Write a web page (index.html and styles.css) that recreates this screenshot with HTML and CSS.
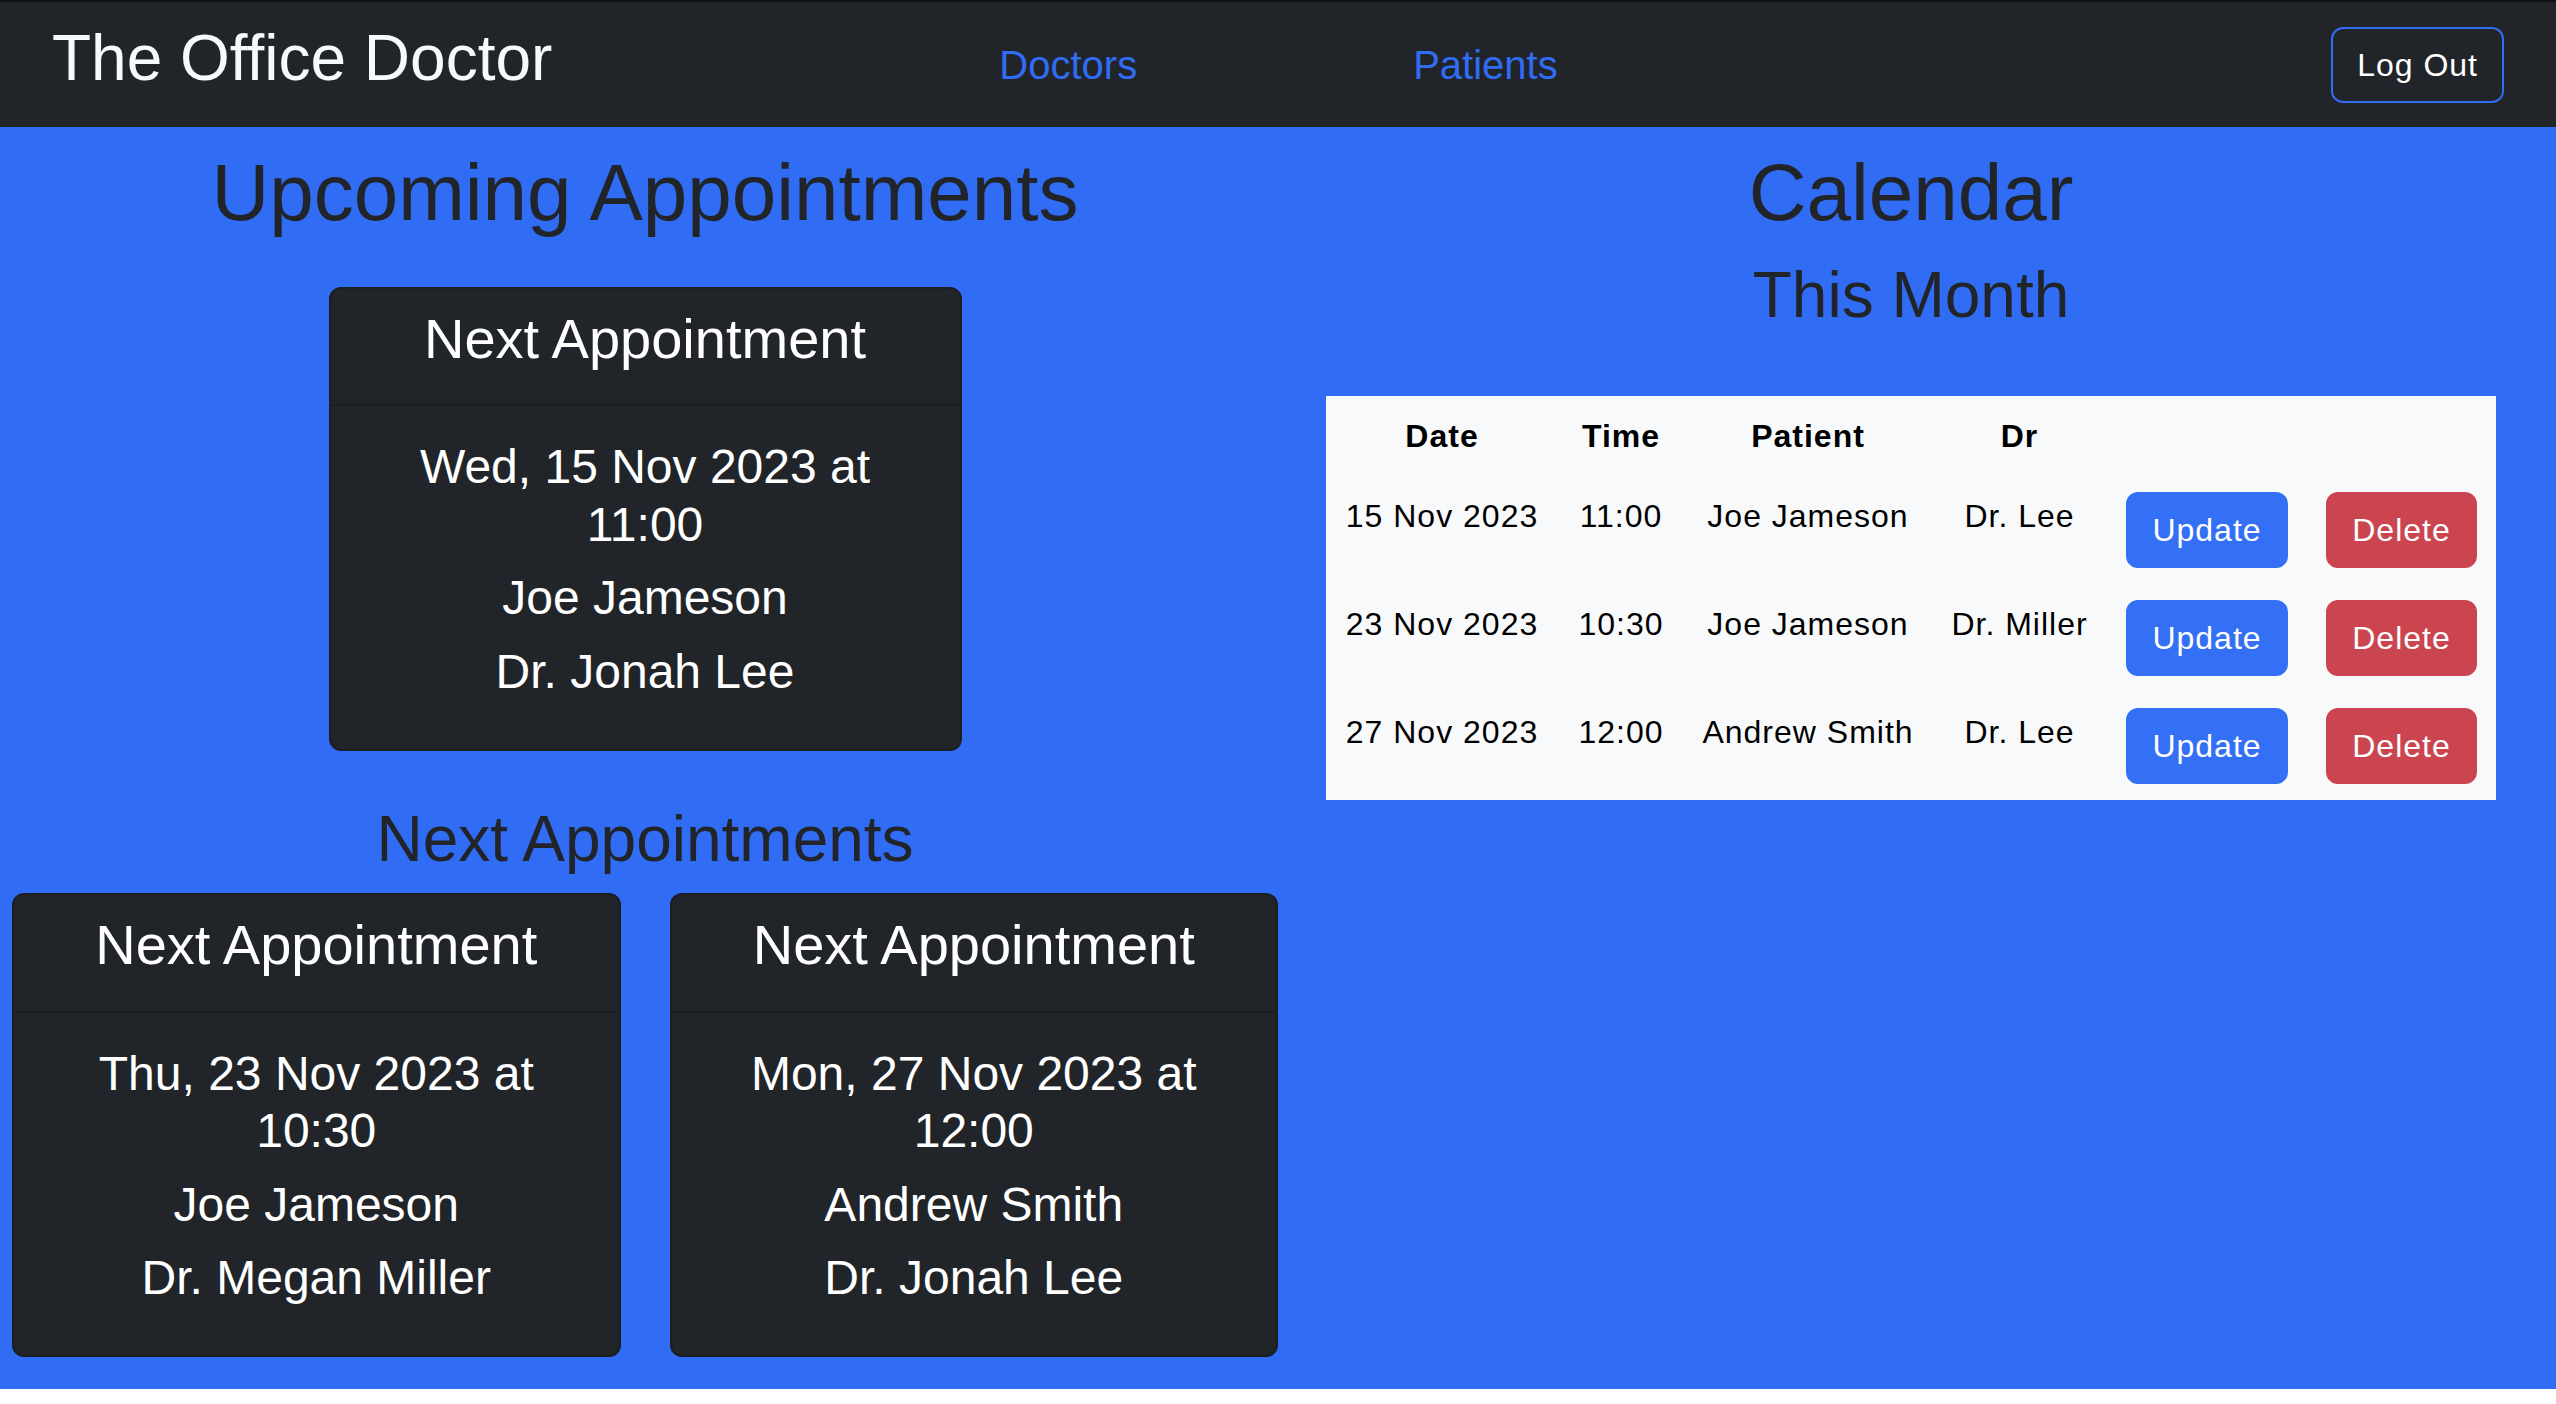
FILE: index.html
```html
<!DOCTYPE html>
<html lang="en">
<head>
<meta charset="utf-8">
<title>The Office Doctor</title>
<link rel="stylesheet" href="styles.css">
</head>
<body>
<nav class="navbar">
  <a class="brand" href="#">The Office Doctor</a>
  <div class="nav-links">
    <a class="nav-link" href="#">Doctors</a>
    <a class="nav-link" href="#">Patients</a>
  </div>
  <button class="btn-logout" type="button">Log Out</button>
</nav>

<main class="dashboard">
  <section class="col-left">
    <h1 class="page-title">Upcoming Appointments</h1>
    <div class="card card-featured">
      <div class="card-header"><h3>Next Appointment</h3></div>
      <div class="card-body">
        <h4>Wed, 15 Nov 2023 at 11:00</h4>
        <h4>Joe Jameson</h4>
        <h4>Dr. Jonah Lee</h4>
      </div>
    </div>
    <h2 class="section-title">Next Appointments</h2>
    <div class="card-grid">
      <div class="card">
        <div class="card-header"><h3>Next Appointment</h3></div>
        <div class="card-body">
          <h4>Thu, 23 Nov 2023 at 10:30</h4>
          <h4>Joe Jameson</h4>
          <h4>Dr. Megan Miller</h4>
        </div>
      </div>
      <div class="card">
        <div class="card-header"><h3>Next Appointment</h3></div>
        <div class="card-body">
          <h4>Mon, 27 Nov 2023 at 12:00</h4>
          <h4>Andrew Smith</h4>
          <h4>Dr. Jonah Lee</h4>
        </div>
      </div>
    </div>
  </section>

  <section class="col-right">
    <h1 class="page-title">Calendar</h1>
    <h2 class="section-title">This Month</h2>
    <table class="schedule">
      <colgroup>
        <col class="c-date">
        <col class="c-time">
        <col class="c-patient">
        <col class="c-dr">
        <col class="c-update">
        <col class="c-delete">
      </colgroup>
      <thead>
        <tr><th>Date</th><th>Time</th><th>Patient</th><th>Dr</th><th></th><th></th></tr>
      </thead>
      <tbody>
        <tr>
          <td>15 Nov 2023</td><td>11:00</td><td>Joe Jameson</td><td>Dr. Lee</td>
          <td><button class="btn btn-update" type="button">Update</button></td>
          <td><button class="btn btn-delete" type="button">Delete</button></td>
        </tr>
        <tr>
          <td>23 Nov 2023</td><td>10:30</td><td>Joe Jameson</td><td>Dr. Miller</td>
          <td><button class="btn btn-update" type="button">Update</button></td>
          <td><button class="btn btn-delete" type="button">Delete</button></td>
        </tr>
        <tr>
          <td>27 Nov 2023</td><td>12:00</td><td>Andrew Smith</td><td>Dr. Lee</td>
          <td><button class="btn btn-update" type="button">Update</button></td>
          <td><button class="btn btn-delete" type="button">Delete</button></td>
        </tr>
      </tbody>
    </table>
  </section>
</main>
</body>
</html>
```

FILE: styles.css
```css
* { box-sizing: border-box; }

body {
  margin: 0;
  font-family: "Liberation Sans", Arial, Helvetica, sans-serif;
  background: #ffffff;
  color: #212529;
}

/* Navbar */
.navbar {
  display: flex;
  align-items: center;
  height: 127px;
  border-top: 2px solid #0e1012;
  background: #212529;
  padding: 0 52px 0 52px;
}

.brand {
  font-size: 64px;
  line-height: 1.2;
  color: #f8f9fa;
  text-decoration: none;
  padding-bottom: 13px;
}

.nav-links {
  display: flex;
  margin-left: 447px;
  gap: 276px;
}

.nav-link {
  font-size: 40px;
  line-height: 1.5;
  color: #316cf4;
  text-decoration: none;
}

.btn-logout {
  margin-left: auto;
  font-family: inherit;
  font-size: 32px;
  line-height: 48px;
  letter-spacing: 1px;
  color: #ffffff;
  background: transparent;
  border: 2px solid #316cf4;
  border-radius: 12px;
  padding: 12px 24px;
}

/* Main */
.dashboard {
  display: grid;
  grid-template-columns: 1fr 1fr;
  background: #316cf4;
  padding-bottom: 32px;
}

.col-left {
  padding: 18px 0 0 12px;
  text-align: center;
}

.col-right {
  padding: 18px 60px 0 48px;
  text-align: center;
}

.page-title {
  font-size: 80px;
  line-height: 1.2;
  font-weight: 400;
  margin: 0 0 16px;
  color: #212529;
}

.section-title {
  font-size: 64px;
  line-height: 1.2;
  font-weight: 400;
  margin: 0 0 16px;
  color: #212529;
}

/* Cards */
.card {
  background: #212529;
  border: 2px solid #1b1e22;
  border-radius: 12px;
  color: #ffffff;
  text-align: center;
}

.card-featured {
  width: 633px;
  margin: 46px auto 50px;
}

.card-header {
  padding: 16px 32px;
  border-bottom: 2px solid #1b1e22;
}

.card-header h3 {
  font-size: 56px;
  line-height: 1.2;
  font-weight: 400;
  margin: 0 0 16px;
}

.card-body {
  padding: 32px;
}

.card-body h4 {
  font-size: 48px;
  line-height: 1.2;
  font-weight: 400;
  margin: 0 0 16px;
}

.card-grid {
  display: grid;
  grid-template-columns: 1fr 1fr;
  gap: 49px;
}

/* Table */
.schedule {
  width: 100%;
  margin-top: 62px;
  border-collapse: collapse;
  table-layout: fixed;
  background: #f8f9fa;
  font-size: 32px;
  line-height: 1.5;
  letter-spacing: 1px;
  color: #000000;
}

.c-date { width: 232px; }
.c-time { width: 126px; }
.c-patient { width: 248px; }
.c-dr { width: 175px; }
.c-update { width: 200px; }
.c-delete { width: 189px; }

.schedule th,
.schedule td {
  padding: 16px;
  vertical-align: top;
  text-align: center;
  white-space: nowrap;
}

.schedule th {
  font-weight: 700;
}

.btn {
  font-family: inherit;
  font-size: 32px;
  line-height: 48px;
  letter-spacing: 1px;
  padding: 12px 24px;
  border: 2px solid transparent;
  border-radius: 12px;
  color: #ffffff;
}

.btn-update {
  background: #3370f5;
  border-color: #3370f5;
}

.btn-delete {
  background: #ca4550;
  border-color: #ca4550;
}
```
